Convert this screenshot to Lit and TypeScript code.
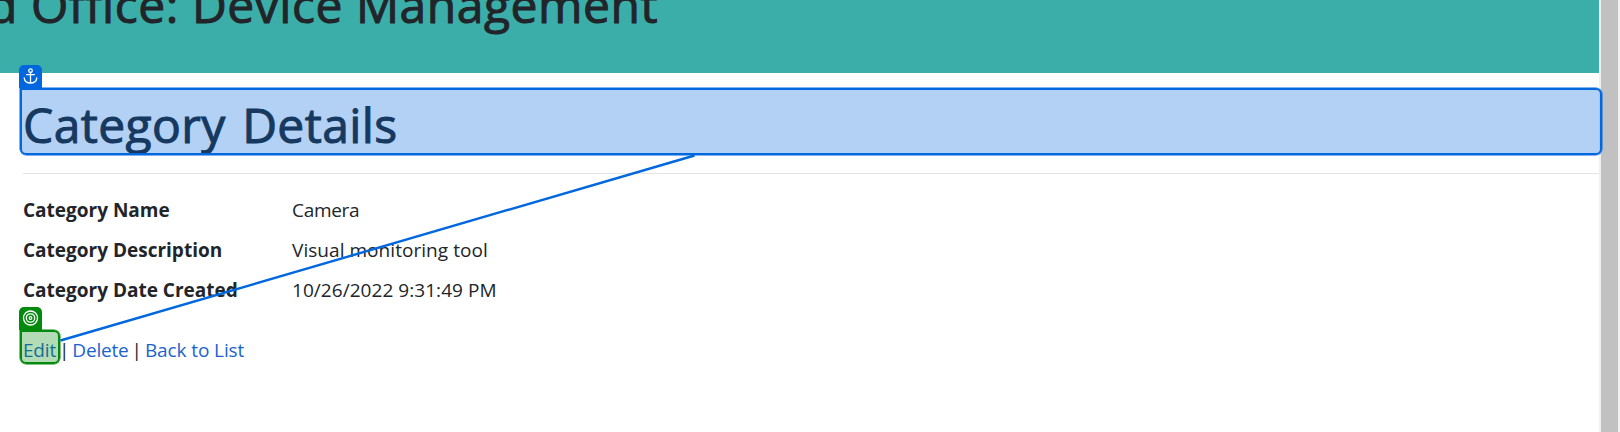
import { LitElement, html, css } from "lit";
import { customElement } from "lit/decorators.js";

@customElement("app-root")
export class AppRoot extends LitElement {
  static styles = css`
    :host { display: block; position: relative; width: 1620px; height: 432px; overflow: hidden; background: #fff; color: #212529; font: 19px/30px "Segoe UI", "Open Sans", "Noto Sans", sans-serif; }
    .shell { display: flex; height: 432px; }
    .page { flex: 1; min-width: 0; }
    .track { width: 17px; padding: 0 2px; background: #f0f0f0; }
    .thumb { height: 100%; background: #c1c1c1; }
    .banner { height: 73px; background: #3caea9; overflow: hidden; white-space: nowrap; }
    h1 { margin: 0; font-size: 48px; font-weight: 500; line-height: 60px; white-space: nowrap; -webkit-text-stroke: 1px currentColor; }
    .banner h1 { margin: -25px 0 0 -12px; letter-spacing: 0.53px; }
    main { padding: 17px 0 0 23px; }
    main h1 { height: 64px; overflow: hidden; line-height: 70px; letter-spacing: 0.4px; word-spacing: 3.5px; }
    hr { margin: 19px 0 21px; border: 0; border-top: 1px solid #e4e4e4; }
    dl { margin: 0; display: grid; grid-template-columns: 269px 1fr; row-gap: 10px; white-space: nowrap; }
    dt { font-weight: 700; }
    dd { margin: 0; }
    .short { letter-spacing: -0.3px; }
    .long { letter-spacing: 0.05px; }
    .links { display: flex; margin-top: 30px; white-space: pre; letter-spacing: -0.2px; }
    .links span { width: 16.4px; text-align: center; }
    .links .last { letter-spacing: -0.1px; }
    a { color: #1a63cf; text-decoration: none; }
    .anchor, .target { position: absolute; box-sizing: border-box; border: 2px solid #0067df; border-radius: 0 6px 6px 6px; }
    .anchor { left: 19.5px; top: 87.5px; width: 1582.5px; height: 67.5px; background: rgba(0, 103, 223, 0.3); box-shadow: 0 0 0 0.5px #0067df; }
    .target { left: 19.5px; top: 329.5px; width: 40.5px; height: 34.5px; border-color: #038a0e; background: rgba(3, 138, 14, 0.3); box-shadow: 0 0 0 0.5px #038a0e; }
    .badge { position: absolute; left: 19px; width: 23px; height: 23px; border-radius: 5px 5px 0 0; }
    .blue { top: 65px; background: #0067df; }
    .green { top: 307px; background: #038a0e; }
    .badge svg { display: block; }
    .wire { position: absolute; left: 0; top: 0; }
  `;

  render() {
    return html`
      <div class="shell">
        <div class="page">
          <div class="banner"><h1>d Office: Device Management</h1></div>
          <main>
            <h1><span>Category Details</span></h1>
            <hr />
            <dl>
              <dt><span>Category Name</span></dt><dd class="short"><span>Camera</span></dd>
              <dt><span>Category Description</span></dt><dd class="long"><span>Visual monitoring tool</span></dd>
              <dt><span>Category Date Created</span></dt><dd class="long"><span>10/26/2022 9:31:49 PM</span></dd>
            </dl>
            <div class="links"><a>Edit</a><span>|</span><a>Delete</a><span>|</span><a class="last">Back to List</a></div>
          </main>
        </div>
        <div class="track"><div class="thumb"></div></div>
      </div>
      <div class="anchor"></div>
      <div class="target"></div>
      <div class="badge blue">
        <svg width="23" height="23" fill="none" stroke="#fff" stroke-width="1.3" stroke-linecap="round">
          <circle cx="11.5" cy="5.7" r="1.8" />
          <path d="M11.5 7.5V18M7.6 9.6h7.8M5.2 12.8c.4 3.3 2.8 5.2 6.3 5.2s5.9-1.9 6.3-5.2" />
        </svg>
      </div>
      <div class="badge green">
        <svg width="23" height="23" fill="none" stroke="#fff" stroke-width="1.3">
          <circle cx="11.5" cy="11" r="7" /><circle cx="11.5" cy="11" r="4.2" /><circle cx="11.5" cy="11" r="1.3" />
        </svg>
      </div>
      <svg class="wire" width="1620" height="432"><path d="M694.5 155.5L60.5 340.5" stroke="#0067df" stroke-width="2.4" /></svg>
    `;
  }
}
